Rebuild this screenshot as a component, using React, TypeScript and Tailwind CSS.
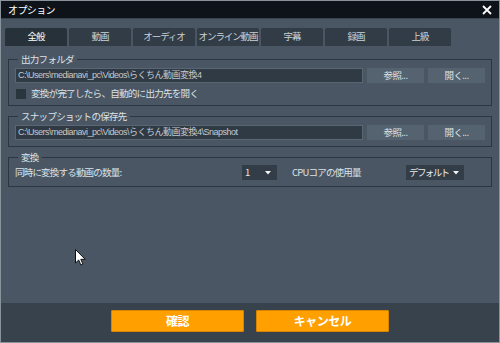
const tabs = ["全般", "動画", "オーディオ", "オンライン動画", "字幕", "録画", "上級"];

const font = { fontFamily: '"Noto Sans CJK JP", "Liberation Sans", sans-serif' };
const pathFont = { fontFamily: '"Liberation Sans", "Noto Sans CJK JP", sans-serif' };

const PathRow = ({ path }: { path: string }) => (
  <div className="flex items-center gap-[4px]">
    <div
      style={pathFont}
      className="flex-1 h-[15px] bg-[#2f3a44] border border-[#5a6673] flex items-center px-[2px] text-[9px] tracking-[-0.5px] text-[#c4cad0] leading-none whitespace-nowrap"
    >
      {path}
    </div>
    <button className="w-[57px] h-[15px] bg-[#556371] text-[9.5px] tracking-[-0.6px] text-[#dfe3e7] leading-none">参照...</button>
    <button className="w-[57px] h-[15px] bg-[#556371] text-[9.5px] tracking-[-0.6px] text-[#dfe3e7] leading-none">開く...</button>
  </div>
);

const Select = ({ label, width }: { label: string; width: string }) => (
  <div className={`${width} h-[15px] bg-[#323d48] flex items-center justify-between gap-[4px] pl-[3px] pr-[6px] text-[9.5px] tracking-[-1.6px] text-[#e6e9ec] leading-none whitespace-nowrap`}>
    <span>{label}</span>
    <svg width="6" height="4" viewBox="0 0 6 4" className="shrink-0">
      <path d="M0 0h6L3 3.5z" fill="#f2f4f6" />
    </svg>
  </div>
);

const Group = ({ title, children }: { title: string; children: React.ReactNode }) => (
  <fieldset className="border border-[#2c3640] px-[6px] pb-[6px] mx-[7px] min-w-0">
    <legend className="ml-[3px] px-[3px] text-[9.5px] tracking-[-0.7px] leading-[14px] text-[#dde2e6]">{title}</legend>
    {children}
  </fieldset>
);

export default function App() {
  return (
    <div style={font} className="relative w-[500px] h-[343px] flex flex-col bg-[#4a5664] border border-[#8a939c] overflow-hidden">
      {/* title */}
      <div className="h-[18px] bg-[#0e1319] border-b border-[#38434e] flex items-center justify-between pl-[7px] pr-[7px] shrink-0">
        <span className="text-[10px] tracking-[-0.6px] text-white leading-none">オプション</span>
        <svg width="10" height="10" viewBox="0 0 10 10">
          <path d="M1 1l8 8M9 1l-8 8" stroke="#ffffff" strokeWidth="1.8" />
        </svg>
      </div>

      {/* tabs */}
      <div className="flex gap-[2px] pl-[4px] mt-[9px] shrink-0">
        {tabs.map((t, i) => (
          <div
            key={t}
            className={`w-[62px] shrink-0 h-[18px] rounded-t-[2px] flex items-center justify-center text-[9.5px] tracking-[-1.1px] leading-none whitespace-nowrap ${
              i === 0 ? "bg-[#27313a] text-white" : "bg-[#323c46] text-[#ccd2d8]"
            }`}
          >
            {t}
          </div>
        ))}
      </div>

      <div className="flex flex-col gap-[3px] mt-[6px]">
        <Group title="出力フォルダ">
          <div className="pt-[2px]">
            <PathRow path="C:\Users\medianavi_pc\Videos\らくちん動画変換4" />
          </div>
          <div className="flex items-center gap-[5px] mt-[6px] pl-[1px]">
            <div className="w-[10px] h-[10px] bg-[#2b353e]" />
            <span className="text-[9.5px] tracking-[-0.7px] text-[#dde2e6] leading-none">変換が完了したら、自動的に出力先を開く</span>
          </div>
        </Group>

        <Group title="スナップショットの保存先">
          <div className="pt-[2px]">
            <PathRow path="C:\Users\medianavi_pc\Videos\らくちん動画変換4\Snapshot" />
          </div>
        </Group>

        <Group title="変換">
          <div className="flex items-center pt-[1px] text-[9.5px] tracking-[-0.8px] text-[#dde2e6] leading-none whitespace-nowrap">
            <span className="w-[227px]">同時に変換する動画の数量:</span>
            <Select label="1" width="w-[35px]" />
            <span className="ml-[15px] w-[114px]">CPUコアの使用量</span>
            <Select label="デフォルト" width="w-[58px]" />
          </div>
        </Group>
      </div>

      <div className="flex-1" />

      {/* footer */}
      <div className="h-[39px] bg-[#37424d] flex items-start justify-center gap-[12px] pt-[7px] shrink-0">
        <button className="w-[133px] h-[22px] bg-[#ffa000] border border-[#d88400] rounded-[1px] text-[12px] tracking-[-0.5px] font-bold text-white leading-none">
          確認
        </button>
        <button className="w-[133px] h-[22px] bg-[#ffa000] border border-[#d88400] rounded-[1px] text-[12px] tracking-[-0.5px] font-bold text-white leading-none">
          キャンセル
        </button>
      </div>

      {/* mouse pointer */}
      <svg className="absolute left-[74px] top-[248px]" width="11" height="17" viewBox="0 0 11 17">
        <path d="M0.5 0.5v13.5l3.2-3 2.2 5 2-0.9-2.1-4.8h4.4z" fill="#ffffff" stroke="#111111" strokeWidth="1" />
      </svg>
    </div>
  );
}
